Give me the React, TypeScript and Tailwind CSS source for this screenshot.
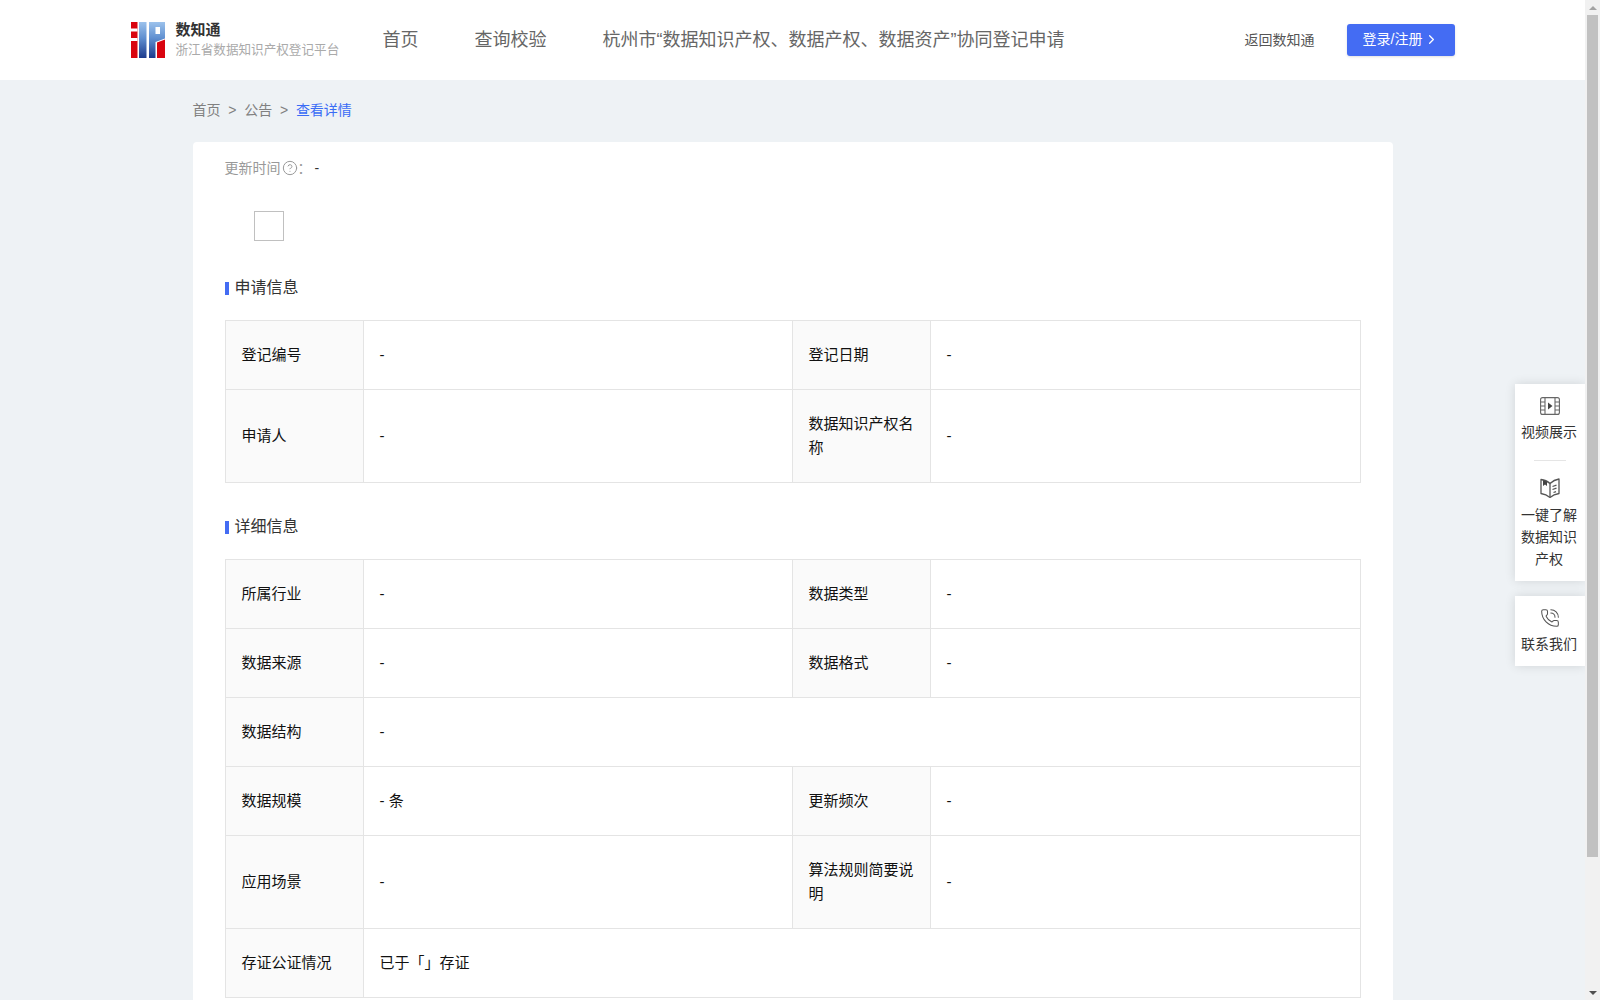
import { ChevronRight, CircleHelp, PhoneCall } from 'lucide-react';

type Cell = { label: string; value: string; span?: boolean };

const applyRows: Cell[][] = [
  [
    { label: '登记编号', value: '-' },
    { label: '登记日期', value: '-' },
  ],
  [
    { label: '申请人', value: '-' },
    { label: '数据知识产权名称', value: '-' },
  ],
];

const detailRows: Cell[][] = [
  [
    { label: '所属行业', value: '-' },
    { label: '数据类型', value: '-' },
  ],
  [
    { label: '数据来源', value: '-' },
    { label: '数据格式', value: '-' },
  ],
  [{ label: '数据结构', value: '-', span: true }],
  [
    { label: '数据规模', value: '- 条' },
    { label: '更新频次', value: '-' },
  ],
  [
    { label: '应用场景', value: '-' },
    { label: '算法规则简要说明', value: '-' },
  ],
  [{ label: '存证公证情况', value: '已于「」存证', span: true }],
];

const Logo = () => (
  <svg width="34" height="36" viewBox="0 0 34 36" className="shrink-0">
    <defs>
      <linearGradient id="logoBlue" x1="0" y1="0" x2="0" y2="1">
        <stop offset="0" stopColor="#9cc2ec" />
        <stop offset="0.45" stopColor="#5f8fd0" />
        <stop offset="1" stopColor="#1c3a8c" />
      </linearGradient>
    </defs>
    <rect x="0" y="0" width="6.5" height="36" fill="#d9040f" />
    <rect x="0" y="6.5" width="6.5" height="3" fill="#fff" />
    <rect x="0" y="16" width="6.5" height="3" fill="#fff" />
    <rect x="8" y="0" width="7.5" height="36" fill="url(#logoBlue)" />
    <path d="M18 0H34V16.5L24.5 20V36H18Z" fill="url(#logoBlue)" />
    <rect x="24.5" y="5" width="4.5" height="7" fill="#fff" />
    <path d="M26 20.5L34 17.5V36H26Z" fill="#d9040f" />
  </svg>
);

const FilmIcon = () => (
  <svg width="20" height="18" viewBox="0 0 20 18" fill="none" stroke="#666" strokeWidth="1.1">
    <rect x="0.6" y="0.6" width="18.8" height="16.8" rx="2" />
    <path d="M5 0.6V17.4M15 0.6V17.4M0.6 5H5M0.6 9H5M0.6 13H5M15 5H19.4M15 9H19.4M15 13H19.4" />
    <path d="M8 5.5L12.5 9L8 12.5Z" fill="#444" stroke="none" />
  </svg>
);

const BookIcon = () => (
  <svg width="20" height="20" viewBox="0 0 20 20" fill="none" stroke="#555" strokeWidth="1.3" strokeLinejoin="round">
    <path d="M1 1.5C4 1.8 7.5 3.2 10 5.5C12.5 3.2 16 1.5 19 1V15.5C16 16 12.5 17.4 10 19.4C7.5 17.4 4 16 1 15.5Z" />
    <path d="M10 5.5V19" />
    <path d="M3 2.2L3 8L5 6.6L7 8L7 3.6Z" fill="#444" stroke="none" />
    <path d="M12.5 8.5L16.5 7.2M12.5 11.5L16.5 10.2M13.5 14.5L16 13.6" />
  </svg>
);

const InfoTable = ({ rows }: { rows: Cell[][] }) => (
  <table className="w-[1135px] table-fixed border-collapse text-[15px] leading-6 text-[#111]">
    <colgroup>
      <col className="w-[138px]" />
      <col className="w-[429px]" />
      <col className="w-[138px]" />
      <col className="w-[430px]" />
    </colgroup>
    <tbody>
      {rows.map((row, i) => (
        <tr key={i}>
          {row.map(cell => (
            <Pair key={cell.label} cell={cell} />
          ))}
        </tr>
      ))}
    </tbody>
  </table>
);

const Pair = ({ cell }: { cell: Cell }) => (
  <>
    <th className="border border-[#e4e4e4] bg-[#fafafa] px-4 py-[22px] text-left font-normal">{cell.label}</th>
    <td className="border border-[#e4e4e4] px-4 py-[22px]" colSpan={cell.span ? 3 : 1}>
      {cell.value}
    </td>
  </>
);

const SectionTitle = ({ title, className }: { title: string; className: string }) => (
  <div className={`flex h-6 items-center gap-[6px] ${className}`}>
    <span className="h-[13px] w-1 bg-[#446cf3]" />
    <span className="mb-px text-base text-[#333]">{title}</span>
  </div>
);

export default function App() {
  return (
    <div className="flex h-screen overflow-hidden bg-[#eef2f5] font-['Liberation_Sans','Noto_Sans_CJK_SC',sans-serif]">
      <div className="relative w-[1585px] shrink-0 overflow-hidden">
        {/* Top bar */}
        <header className="h-20 bg-white">
          <div className="mx-auto flex h-full w-[1324px] items-center">
            <Logo />
            <div className="ml-[11px] flex w-[163px] flex-col">
              <span className="text-[15px] leading-[19px] font-bold text-[#333]">数知通</span>
              <span className="pt-px text-[12.6px] leading-5 whitespace-nowrap text-[#aaa]">浙江省数据知识产权登记平台</span>
            </div>
            <nav className="ml-11 flex gap-14 text-lg text-[#666]">
              <span>首页</span>
              <span>查询校验</span>
              <span className="whitespace-nowrap">杭州市“数据知识产权、数据产权、数据资产”协同登记申请</span>
            </nav>
            <span className="ml-auto text-sm text-[#555]">返回数知通</span>
            <button className="ml-8 flex h-8 w-[108px] items-center justify-center gap-[2px] rounded-[3px] bg-[#446cf3] pb-[2px] pl-px text-sm text-white shadow-sm">
              登录/注册
              <ChevronRight size={15} strokeWidth={2} />
            </button>
          </div>
        </header>

        <main className="mx-auto w-[1200px]">
          {/* Breadcrumb */}
          <div className="flex h-[62px] items-center gap-[7.75px] pb-[2px] text-sm text-[#808080]">
            <span>首页</span>
            <span>&gt;</span>
            <span>公告</span>
            <span>&gt;</span>
            <span className="text-[#3a6cf5]">查看详情</span>
          </div>

          <section className="rounded-t-[4px] bg-white px-8 pt-[15px] pb-10">
            <div className="flex h-[22px] items-center text-sm text-[#999]">
              更新时间
              <CircleHelp size={16} strokeWidth={1.5} className="ml-px" />
              <span>：</span>
              <span className="ml-[3px] text-[#333]">-</span>
            </div>

            <div className="mt-8 ml-[29px] h-[30px] w-[30px] border border-[#c0c0c0]" />

            <SectionTitle title="申请信息" className="mt-[35px]" />
            <div className="mt-5">
              <InfoTable rows={applyRows} />
            </div>

            <SectionTitle title="详细信息" className="mt-8" />
            <div className="mt-5">
              <InfoTable rows={detailRows} />
            </div>
          </section>
        </main>

        {/* Floating side tools */}
        <aside className="absolute top-[384px] right-0 flex w-[70px] flex-col gap-[15px] text-center text-sm leading-[22px] text-[#333]">
          <div className="flex h-[197px] flex-col items-center bg-white pt-[13px] shadow-[0_0_10px_rgba(0,0,0,0.12)]">
            <FilmIcon />
            <span className="mt-[6px] mr-[2px]">视频展示</span>
            <span className="mt-[17px] h-px w-8 bg-[#e5e5e5]" />
            <span className="mt-[17px]">
              <BookIcon />
            </span>
            <span className="mt-[6px] mr-[2px] w-14">一键了解数据知识产权</span>
          </div>
          <div className="flex h-[70px] flex-col items-center bg-white pt-3 shadow-[0_0_10px_rgba(0,0,0,0.12)]">
            <PhoneCall size={20} strokeWidth={1.25} color="#555" />
            <span className="mt-[5px] mr-[2px]">联系我们</span>
          </div>
        </aside>
      </div>

      {/* Browser scrollbar as captured in the picture */}
      <div className="flex w-[15px] flex-col items-center bg-[#f1f1f1]">
        <div className="flex h-[15px] items-center justify-center">
          <span className="h-0 w-0 border-x-[4px] border-b-[4px] border-x-transparent border-b-[#a3a3a3]" />
        </div>
        <div className="h-[842px] w-[11px] bg-[#c1c1c1]" />
        <div className="mt-auto flex h-[15px] items-center justify-center">
          <span className="h-0 w-0 border-x-[4px] border-t-[4px] border-x-transparent border-t-[#505050]" />
        </div>
      </div>
    </div>
  );
}
